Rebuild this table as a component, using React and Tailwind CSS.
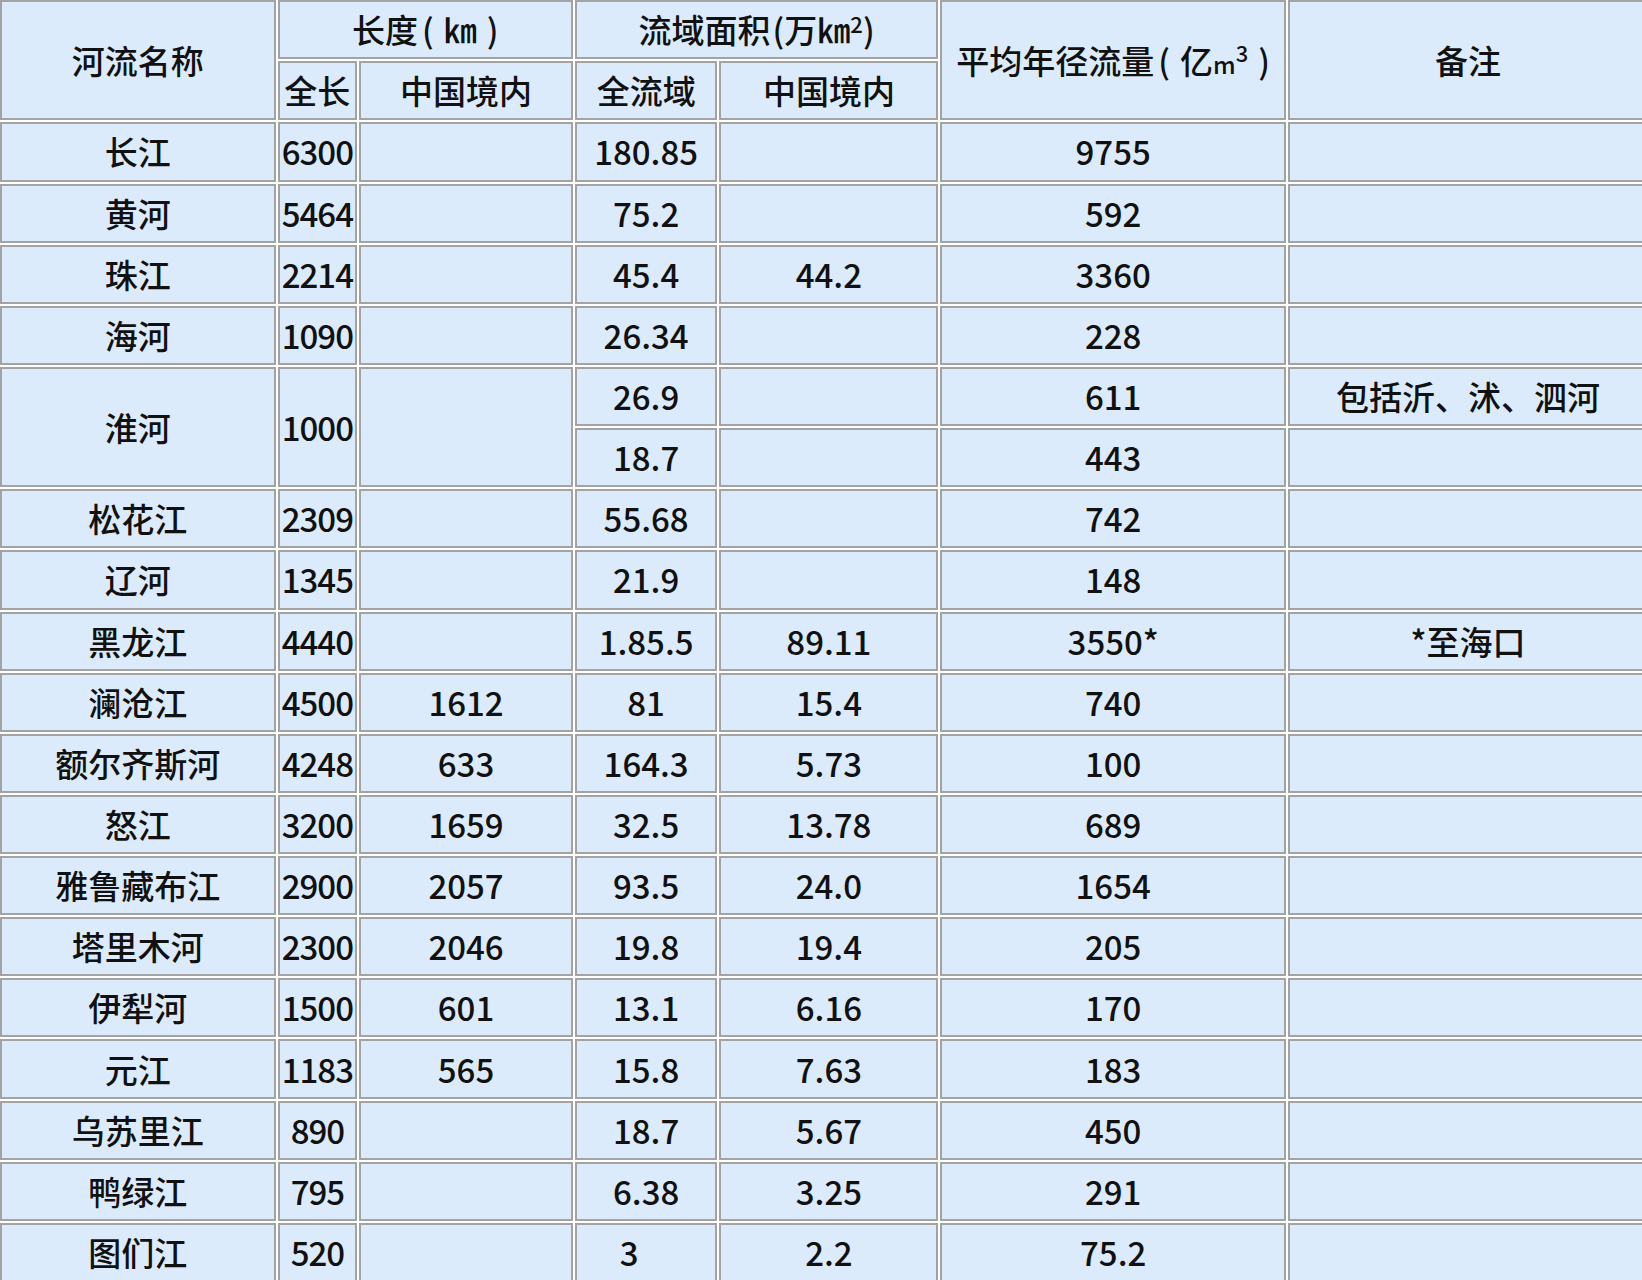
import React from 'react';

const rivers = [
    ['长江', '6300', '', '180.85', '', '9755', ''],
    ['黄河', '5464', '', '75.2', '', '592', ''],
    ['珠江', '2214', '', '45.4', '44.2', '3360', ''],
    ['海河', '1090', '', '26.34', '', '228', ''],
    'huai',
    ['松花江', '2309', '', '55.68', '', '742', ''],
    ['辽河', '1345', '', '21.9', '', '148', ''],
    ['黑龙江', '4440', '', '1.85.5', '89.11', '3550*', '*至海口'],
    ['澜沧江', '4500', '1612', '81', '15.4', '740', ''],
    ['额尔齐斯河', '4248', '633', '164.3', '5.73', '100', ''],
    ['怒江', '3200', '1659', '32.5', '13.78', '689', ''],
    ['雅鲁藏布江', '2900', '2057', '93.5', '24.0', '1654', ''],
    ['塔里木河', '2300', '2046', '19.8', '19.4', '205', ''],
    ['伊犁河', '1500', '601', '13.1', '6.16', '170', ''],
    ['元江', '1183', '565', '15.8', '7.63', '183', ''],
    ['乌苏里江', '890', '', '18.7', '5.67', '450', ''],
    ['鸭绿江', '795', '', '6.38', '3.25', '291', ''],
    ['图们江', '520', '', '3', '2.2', '75.2', ''],
];

const td = 'border-2 border-[#a3a3a3] bg-[#dcebfb] text-center align-middle p-0 h-[59.15px] whitespace-nowrap';
const th = 'border-2 border-[#a3a3a3] bg-[#dcebfb] text-center align-middle p-0 h-[59.2px] font-[500] whitespace-nowrap';

const App = () => {
    return (
        <div className="w-[1642px] h-[1280px] overflow-hidden bg-white">
            <table className="-m-[2px] w-[1652px] table-fixed border-separate border-spacing-[2px] bg-white text-[33px] leading-none text-[#111] font-[500] font-['Noto_Sans_CJK_SC','Noto_Sans',sans-serif]">
                <colgroup>
                    <col className="w-[275.5px]" />
                    <col className="w-[79.7px]" />
                    <col className="w-[213.7px]" />
                    <col className="w-[142.5px]" />
                    <col className="w-[219px]" />
                    <col className="w-[345.6px]" />
                    <col className="w-[360px]" />
                </colgroup>
                <thead>
                    <tr>
                        <th rowSpan={2} className={th}>河流名称</th>
                        <th colSpan={2} className={th}>
                            长度<span className="ml-[4px] mr-[10px]">(</span>㎞<span className="ml-[10px]">)</span>
                        </th>
                        <th colSpan={2} className={th}>
                            流域面积<span className="ml-[2px]">(</span>万㎞<sup className="text-[22px] -top-[10px]">2</sup>)
                        </th>
                        <th rowSpan={2} className={th}>
                            平均年径流量<span className="ml-[4px] mr-[10px]">(</span>亿<span className="text-[24px]">m</span><sup className="text-[22px] -top-[12px]">3</sup><span className="ml-[10px]">)</span>
                        </th>
                        <th rowSpan={2} className={th}>备注</th>
                    </tr>
                    <tr>
                        <th className={th}>全长</th>
                        <th className={th}>中国境内</th>
                        <th className={th}>全流域</th>
                        <th className={th}>中国境内</th>
                    </tr>
                </thead>
                <tbody>
                    {rivers.map((row, index) => {
                        if (row === 'huai') {
                            return (
                                <React.Fragment key={index}>
                                    <tr>
                                        <td rowSpan={2} className={td}>淮河</td>
                                        <td rowSpan={2} className={td + ' tracking-[-1px]'}>1000</td>
                                        <td rowSpan={2} className={td}></td>
                                        <td className={td}>26.9</td>
                                        <td className={td}></td>
                                        <td className={td}>611</td>
                                        <td className={td}>包括沂、沭、泗河</td>
                                    </tr>
                                    <tr>
                                        <td className={td}>18.7</td>
                                        <td className={td}></td>
                                        <td className={td}>443</td>
                                        <td className={td}></td>
                                    </tr>
                                </React.Fragment>
                            );
                        }
                        return (
                            <tr key={index}>
                                {row.map((cell, i) => (
                                    <td
                                        key={i}
                                        className={td + (i === 1 ? ' tracking-[-1px]' : '') + (cell === '3' ? ' pr-[34px]' : '')}
                                    >
                                        {cell}
                                    </td>
                                ))}
                            </tr>
                        );
                    })}
                </tbody>
            </table>
        </div>
    );
};

export default App;
